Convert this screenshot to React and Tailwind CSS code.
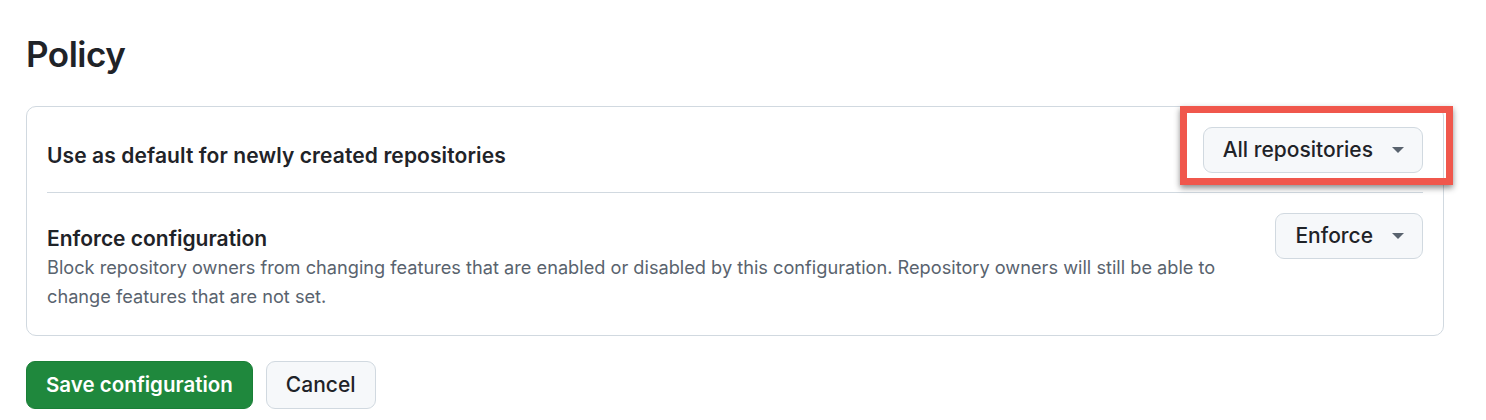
const font = { fontFamily: "Inter, 'Noto Sans', sans-serif" };

function Caret() {
  return (
    <svg width="12" height="6" viewBox="0 0 12 6" className="ml-[19px] shrink-0">
      <path d="M0 0h12L6 6z" fill="#59636e" />
    </svg>
  );
}

function SelectButton({ label }) {
  return (
    <button className="flex h-[46px] items-center rounded-[9px] border border-[#d1d9e0] bg-[#f6f8fa] pl-[19px] pr-[18px] text-[21px] font-medium text-[#1f2328]">
      {label}
      <Caret />
    </button>
  );
}

export default function App() {
  return (
    <div className="min-h-[420px] bg-white pl-[26px] pr-[42px] pt-[30px] text-[#1f2328]" style={font}>
      <h1 className="text-[35px] font-semibold leading-[48px] tracking-[-0.5px]">Policy</h1>

      <div className="mt-[28px] rounded-[10px] border border-[#d1d9e0] px-5">
        <div className="flex items-start justify-between border-b border-[#d1d9e0] pb-[19px] pt-[20px]">
          <div className="mt-[15px] text-[21px] font-semibold leading-[28px] tracking-[0.1px]">Use as default for newly created repositories</div>
          <div className="relative">
            <SelectButton label="All repositories" />
            {/* highlight annotation */}
            <div className="pointer-events-none absolute -bottom-[12px] -left-[23px] -right-[30px] -top-[21px] border-[7px] border-[#f0574c] shadow-[0_3px_6px_rgba(0,0,0,0.45)]" />
          </div>
        </div>

        <div className="flex items-start justify-between pb-[24px] pt-[20px]">
          <div className="pt-[12px]">
            <div className="text-[21px] font-semibold leading-[28px]">Enforce configuration</div>
            <p className="max-w-[1200px] text-[18.2px] leading-[29px] text-[#59636e]">
              Block repository owners from changing features that are enabled or disabled by this configuration. Repository owners will still be able to change features that are not set.
            </p>
          </div>
          <SelectButton label="Enforce" />
        </div>
      </div>

      <div className="mt-[25px] flex gap-[13px]">
        <button className="h-[48px] rounded-[9px] border border-[#1a7f37] bg-[#1f883d] px-[19px] text-[20.5px] font-semibold text-white">
          Save configuration
        </button>
        <button className="h-[48px] rounded-[9px] border border-[#d1d9e0] bg-[#f6f8fa] px-[19px] text-[21px] font-medium text-[#1f2328]">
          Cancel
        </button>
      </div>
    </div>
  );
}
